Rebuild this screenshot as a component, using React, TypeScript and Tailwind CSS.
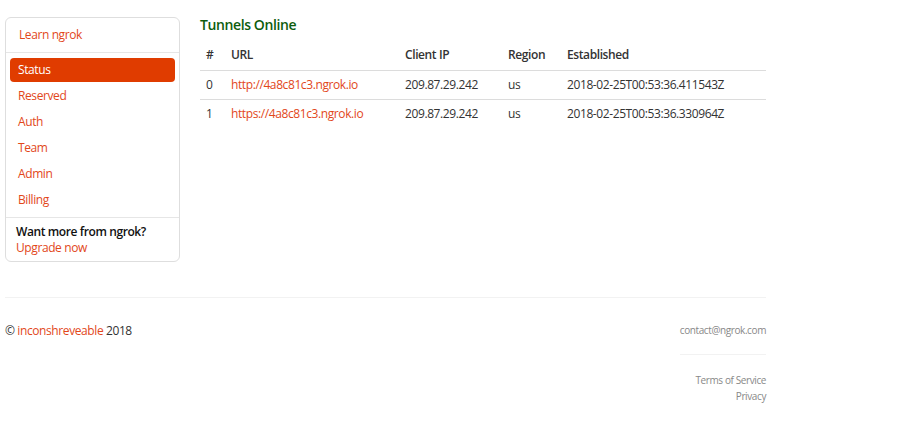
const tunnels = [
  { id: 0, url: "http://4a8c81c3.ngrok.io", ip: "209.87.29.242", region: "us", at: "2018-02-25T00:53:36.411543Z" },
  { id: 1, url: "https://4a8c81c3.ngrok.io", ip: "209.87.29.242", region: "us", at: "2018-02-25T00:53:36.330964Z" },
];

const navItems = ["Status", "Reserved", "Auth", "Team", "Admin", "Billing"];

function Sidebar() {
  return (
    <aside className="w-[175px] shrink-0 self-start mt-[1px] rounded-md border border-[#dedede] bg-white">
      <div className="h-[35px] flex items-center px-[13px] border-b border-[#e6e6e6]">
        <a className="text-[#e2471a]">Learn ngrok</a>
      </div>
      <nav className="flex flex-col gap-[2px] px-1 pt-[5px] pb-[5px] border-b border-[#e6e6e6]">
        {navItems.map((item, i) => (
          <a
            key={item}
            className={
              i === 0
                ? "h-6 flex items-center px-2 rounded bg-[#e03c00] text-white"
                : "h-6 flex items-center px-2 text-[#e2471a]"
            }
          >
            {item}
          </a>
        ))}
      </nav>
      <div className="px-[10px] pt-[6px] pb-[5px] leading-4">
        <p className="text-[#111] font-semibold">Want more from ngrok?</p>
        <a className="text-[#e2471a]">Upgrade now</a>
      </div>
    </aside>
  );
}

function Tunnels() {
  return (
    <main className="flex-1">
      <h3 className="text-[14px] font-semibold text-[#0d5c0d] mt-[1px] mb-[8px] leading-4">Tunnels Online</h3>
      <table className="w-full text-left text-[#333]">
        <thead>
          <tr className="border-b border-[#dcdcdc] h-[29px]">
            <th className="font-semibold pl-[6px] w-[31px]">#</th>
            <th className="font-semibold w-[174px]">URL</th>
            <th className="font-semibold w-[103px]">Client IP</th>
            <th className="font-semibold w-[59px]">Region</th>
            <th className="font-semibold">Established</th>
          </tr>
        </thead>
        <tbody>
          {tunnels.map((t) => (
            <tr key={t.id} className="border-b border-[#dcdcdc] h-[29px] last:border-b-0">
              <td className="pl-[6px]">{t.id}</td>
              <td>
                <a className="text-[#e2471a]">{t.url}</a>
              </td>
              <td>{t.ip}</td>
              <td>{t.region}</td>
              <td>{t.at}</td>
            </tr>
          ))}
        </tbody>
      </table>
    </main>
  );
}

function Footer() {
  return (
    <footer className="mt-[35px] border-t border-[#f2f2f2] flex justify-between pt-[24px]">
      <p className="text-[#333]">
        © <a className="text-[#e2471a]">inconshreveable</a> 2018
      </p>
      <div className="flex flex-col items-end text-[10px] text-[#888]">
        <span className="leading-4">contact@ngrok.com</span>
        <div className="w-full border-t border-[#f2f2f2] mt-[16px] mb-[17px]" />
        <span className="leading-4">Terms of Service</span>
        <span className="leading-4">Privacy</span>
      </div>
    </footer>
  );
}

export default function App() {
  return (
    <div className="min-h-screen bg-white text-[12px] font-['Open_Sans',sans-serif] tracking-[-0.4px]">
      <div className="w-[761px] ml-[5px] pt-[16px]">
        <div className="flex gap-[20px]">
          <Sidebar />
          <Tunnels />
        </div>
        <Footer />
      </div>
    </div>
  );
}
